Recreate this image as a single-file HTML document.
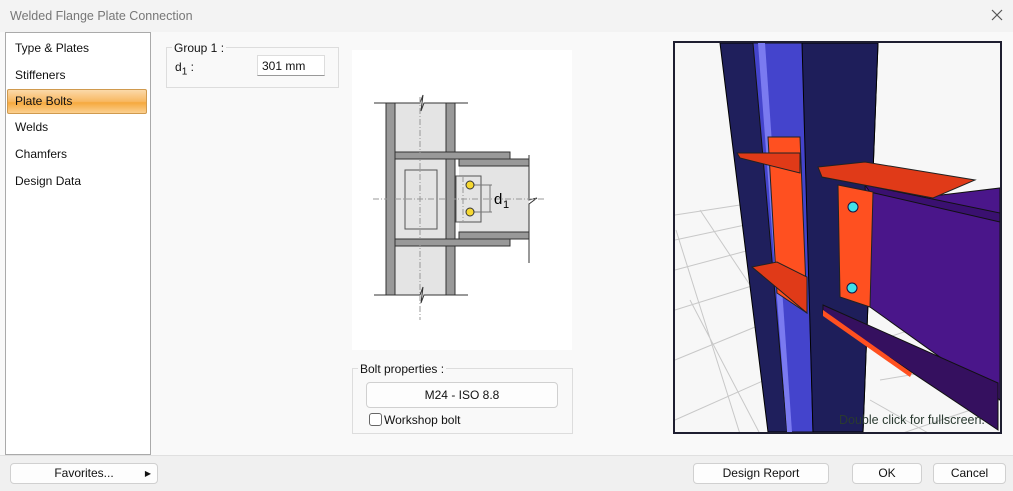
<!DOCTYPE html>
<html><head><style>
*{margin:0;padding:0;box-sizing:border-box}
body{width:1013px;height:491px;background:#f9f9f9;font-family:"Liberation Sans",sans-serif;font-size:12px;color:#111;position:relative;overflow:hidden}
.a{position:absolute}
.btn{position:absolute;background:#fdfdfd;border:1px solid #d0d0d0;border-radius:4px;text-align:center;font-size:12px;line-height:19px}
.nav div{height:27px;line-height:27px;padding-left:9px}
</style></head><body>
<div class="a" style="left:0;top:0;width:1013px;height:32px;background:#f3f3f3"></div>
<div class="a" style="left:10px;top:9px;font-size:12.5px;color:#777">Welded Flange Plate Connection</div>
<svg class="a" style="left:991px;top:9px" width="12" height="12"><path d="M1 1L11 11M11 1L1 11" stroke="#555" stroke-width="1.2"/></svg>
<div class="a nav" style="left:5px;top:32px;width:146px;height:423px;background:#fff;border:1px solid #aaa;padding-top:2px">
<div>Type &amp; Plates</div><div>Stiffeners</div>
<div style="background:linear-gradient(#fbd9a9,#f8b862 50%,#f6a93e 55%,#fbd08f);border:1px solid #d09a4e;margin:0 3px 0 1px;height:25px;line-height:23px;padding-left:7px;border-radius:2px">Plate Bolts</div>
<div>Welds</div><div>Chamfers</div><div>Design Data</div></div>
<div class="a" style="left:166px;top:47px;width:173px;height:41px;border:1px solid #ddd"></div>
<div class="a" style="left:172px;top:41px;background:#f9f9f9;padding:0 2px">Group 1 :</div>
<div class="a" style="left:175px;top:60px">d<sub style="font-size:10px">1</sub> :</div>
<div class="a" style="left:257px;top:55px;width:68px;height:21px;background:#fff;border:1px solid #ddd;border-bottom-color:#999;padding:3px 0 0 4px">301 mm</div>
<svg class="a" style="left:352px;top:50px" width="220" height="300" viewBox="352 50 220 300">
<rect x="352" y="50" width="220" height="300" fill="#fff"/>
<rect x="395" y="103" width="51" height="192" fill="#e4e4e4"/>
<rect x="459" y="166" width="70" height="69" fill="#e4e4e4"/>
<rect x="456" y="176" width="25" height="46" fill="#e4e4e4" stroke="#555"/>
<g fill="#999" stroke="#333" stroke-width="1">
<rect x="386" y="103" width="9" height="192"/><rect x="446" y="103" width="9" height="192"/>
<rect x="395" y="152" width="115" height="7"/><rect x="395" y="239" width="115" height="7"/>
<rect x="459" y="159" width="70" height="7"/><rect x="459" y="232" width="70" height="7"/>
</g>
<rect x="405" y="170" width="32" height="59" fill="none" stroke="#555"/>
<path d="M374 103H420l3-8-2 16 3-8H468M374 295H420l3-8-2 16 3-8H468M529 155V200l8-2-8 6 0 8V263" fill="none" stroke="#333"/>
<path d="M420 97V320M373 199H545M463 176V222" stroke="#999" stroke-dasharray="6 2 1 2" fill="none"/>
<path d="M472 185H492M472 212H492M490 185V212" stroke="#777" fill="none"/>
<circle cx="470" cy="185" r="4" fill="#f6d832" stroke="#333"/><circle cx="470" cy="212" r="4" fill="#f6d832" stroke="#333"/>
<text x="494" y="204" font-size="15" font-family="Liberation Sans">d</text><text x="503" y="208" font-size="11" font-family="Liberation Sans">1</text>
</svg>
<div class="a" style="left:352px;top:368px;width:221px;height:66px;border:1px solid #ddd"></div>
<div class="a" style="left:358px;top:362px;background:#f9f9f9;padding:0 2px">Bolt properties :</div>
<div class="btn" style="left:366px;top:382px;width:192px;height:26px;line-height:24px">M24 - ISO 8.8</div>
<div class="a" style="left:369px;top:413px;width:13px;height:13px;border:1px solid #666;border-radius:3px;background:#fff"></div>
<div class="a" style="left:384px;top:413px">Workshop bolt</div>
<svg class="a" style="left:673px;top:41px" width="329" height="393" viewBox="673 41 329 393">
<rect x="673" y="41" width="329" height="393" fill="#f7f7f7"/>
<g stroke="#c8c8c8" fill="none">
<path d="M675 215L740 205M675 240L745 225M675 270L750 250M675 310L755 285M675 360L760 325M675 420L765 380M700 210L760 300M676 230L740 434M690 300L760 434M880 340L1000 300M880 380L1000 360M900 434L1000 400M870 400L930 434"/>
</g>
<polygon points="720,43 878,43 863,432 768,432" fill="#1f1f5c" stroke="#000"/>
<polygon points="753,43 803,43 813,432 787,432" fill="#4444cc" stroke="#111"/>
<polygon points="758,43 765,43 792,432 787,432" fill="#7a7af0"/>
<polygon points="768,137 800,137 807,313 777,293" fill="#ff5020" stroke="#222"/>
<polygon points="737,153 800,153 800,173 740,158" fill="#e03a18" stroke="#222"/>
<polygon points="752,267 777,262 807,277 807,313" fill="#e03a18" stroke="#222"/>
<polygon points="802,43 878,43 863,432 813,432" fill="#1e1e5a" stroke="#000"/>
<polygon points="822,177 933,196 1000,188 1000,400 870,307 865,185" fill="#4a168a" stroke="#111"/>
<polygon points="865,185 1000,213 1000,222 870,192" fill="#3a1070" stroke="#111"/>
<polygon points="823,305 998,383 998,430 823,313" fill="#35105f" stroke="#111"/>
<polygon points="823,310 912,373 910,377 823,316" fill="#ff5020"/>
<polygon points="838,185 873,192 870,307 840,297" fill="#ff5020" stroke="#222"/>
<polygon points="818,167 865,162 975,180 933,198 822,177" fill="#e03a18" stroke="#222"/>
<circle cx="853" cy="207" r="5" fill="#40e0e8" stroke="#114"/>
<circle cx="852" cy="288" r="5" fill="#40e0e8" stroke="#114"/>
<text x="839" y="424" font-size="12.5" fill="#2a3a30" font-family="Liberation Sans">Double click for fullscreen.</text>
<rect x="674" y="42" width="327" height="391" fill="none" stroke="#1e1e30" stroke-width="2"/>
</svg>
<div class="a" style="left:0;top:455px;width:1013px;height:36px;background:#f0f0f0;border-top:1px solid #e0e0e0"></div>
<div class="btn" style="left:10px;top:463px;width:148px;height:21px">Favorites...<span style="position:absolute;right:6px;font-size:8px">▶</span></div>
<div class="btn" style="left:693px;top:463px;width:136px;height:21px">Design Report</div>
<div class="btn" style="left:852px;top:463px;width:70px;height:21px">OK</div>
<div class="btn" style="left:933px;top:463px;width:73px;height:21px">Cancel</div>
</body></html>
